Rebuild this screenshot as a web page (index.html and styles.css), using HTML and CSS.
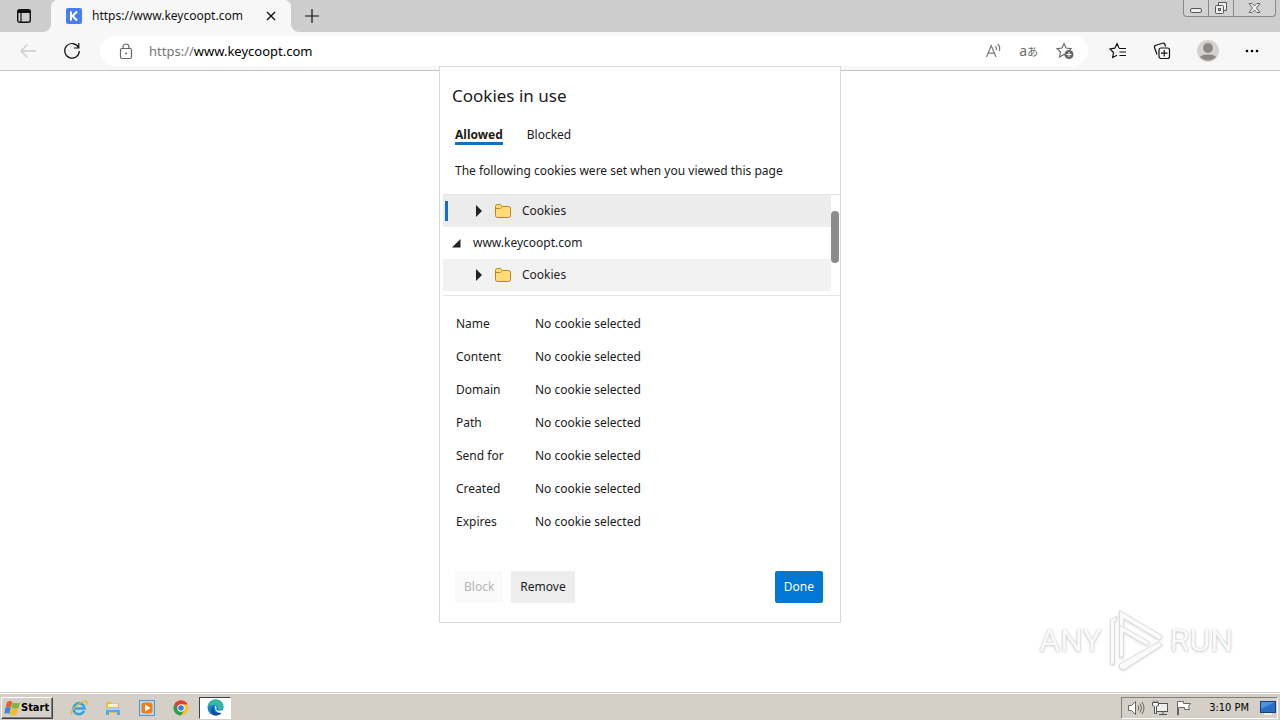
FILE: index.html
```
<!DOCTYPE html>
<html lang="en">
<head>
<meta charset="utf-8">
<title>Cookies in use</title>
<link rel="stylesheet" href="styles.css">
</head>
<body>
<header class="tabstrip">
  <button class="tab-actions" aria-label="Tab actions"><svg width="16" height="16" viewBox="0 0 16 16"><rect x="1.7" y="1.7" width="12.6" height="12.6" rx="2" fill="none" stroke="#111" stroke-width="1.4"/><path d="M1.5 2h13v3h-13z" fill="#111"/><path d="M5 4v10" stroke="#111" stroke-width="1.2"/></svg></button>
  <div class="tab">
    <svg width="16" height="16" viewBox="0 0 16 16"><rect width="16" height="16" rx="2" fill="#4a7df0"/><path d="M5 3.500v9M11 3.500 6.500 8l4.500 4.500" fill="none" stroke="#fff" stroke-width="2"/></svg>
    <span class="tab-title">https://www.keycoopt.com</span>
    <button class="tab-close" aria-label="Close tab"><svg width="10" height="10" viewBox="0 0 10 10"><path d="m1 1 8 8M9 1 1 9" stroke="#111" stroke-width="1.4"/></svg></button>
  </div>
  <button class="tab-new" aria-label="New tab"><svg width="14" height="14" viewBox="0 0 14 14"><path d="M7 0v14M0 7h14" stroke="#111" stroke-width="1.2"/></svg></button>
  <div class="strip-end">
  <div class="caption">
    <button aria-label="Minimize"><svg width="14" height="12" viewBox="0 0 14 12"><rect x="1.5" y="6.5" width="11" height="4" rx="1.5" fill="#eee" stroke="#555"/></svg></button>
    <button aria-label="Restore"><svg width="14" height="13" viewBox="0 0 14 13"><path d="M4.500 3.500v-3h8v8h-3" fill="#eee" stroke="#555"/><rect x="1.500" y="3.500" width="8" height="8" rx="1" fill="#eee" stroke="#555"/><rect x="4.500" y="6.500" width="2" height="2" fill="#ccc" stroke="#555"/></svg></button>
    <button class="caption-close" aria-label="Close"><svg width="13" height="12" viewBox="0 0 13 12"><path d="M1 1.500h3.200L6.500 4l2.300-2.500H12L8.500 6l3.500 4.500H8.800L6.500 8l-2.300 2.500H1L4.500 6z" fill="#eee" stroke="#666"/></svg></button>
  </div>
  </div>
</header>
<nav class="toolbar">
  <button class="back" aria-label="Back" disabled><svg width="18" height="16" viewBox="0 0 18 16"><path d="M17 8H2M8.500 1.500 2 8l6.500 6.500" fill="none" stroke="#ccc" stroke-width="1.300"/></svg></button>
  <button class="reload" aria-label="Refresh"><svg width="18" height="18" viewBox="0 0 18 18"><path d="M15.500 5.500A7.300 7.300 0 1 0 16.300 9M15.800 1v5h-5" fill="none" stroke="#111" stroke-width="1.200"/></svg></button>
  <div class="address">
    <svg class="lock" width="14" height="17" viewBox="0 0 14 17"><rect x="1.500" y="5.500" width="11" height="10" rx="1.500" fill="none" stroke="#666" stroke-width="1.200"/><path d="M4 5.500V4a3 3 0 0 1 6 0v1.500" fill="none" stroke="#666" stroke-width="1.200"/><circle cx="7" cy="10.500" r="1" fill="#666"/></svg>
    <span class="url"><span class="scheme">https://</span>www.keycoopt.com</span>
    <button class="read" aria-label="Read aloud"><svg width="18" height="16" viewBox="0 0 18 16"><path d="m1.500 14 4.700-11.500L11 14M3 10.200h6.400M10.500 3.200a4 4 0 0 1 .8 4M12.800 1a7 7 0 0 1 1.500 7" fill="none" stroke="#777" stroke-width="1.200"/></svg></button>
    <button class="translate" aria-label="Translate"><span class="lat">a</span><span class="kana">あ</span></button>
    <button class="favorite" aria-label="Add to favorites"><svg width="18" height="18" viewBox="0 0 18 18"><path d="m8 1.500 2 4.500 5.200.6L11.500 10l1 5L8 12.500 3.500 15l1-5L1 6.600 6 6z" fill="none" stroke="#666" stroke-width="1.100"/><circle cx="13" cy="12.500" r="4.500" fill="#666"/><path d="M13 10v5M10.500 12.500h5" stroke="#fff"/></svg></button>
  </div>
  <div class="tools">
    <button aria-label="Favorites"><svg width="18" height="18" viewBox="0 0 18 18"><path d="M10 6 8 1.700 5.800 6.200 1 7l3.500 3.500-.8 5L8 13.200M10 6.500h7M10.500 10h6.500M10.500 13.500h6.500" fill="none" stroke="#111" stroke-width="1.200"/></svg></button>
    <button aria-label="Collections"><svg width="18" height="18" viewBox="0 0 18 18"><path d="M4 12.500 1.500 5.500A2 2 0 0 1 3 3.200l6.500-2A2 2 0 0 1 12 2.500l.5 2" fill="none" stroke="#111" stroke-width="1.200"/><rect x="6" y="6" width="10.500" height="10.500" rx="2" fill="#f7f7f7" stroke="#111" stroke-width="1.200"/><path d="M11.200 8v6.500M8 11.200h6.500" stroke="#111" stroke-width="1.200"/></svg></button>
    <button aria-label="Profile"><svg width="22" height="22" viewBox="0 0 22 22"><circle cx="11" cy="11" r="11" fill="#d4d2d0"/><circle cx="11" cy="8" r="5" fill="#8b8886"/><path d="M3 17c1-3.500 15-3.500 16 0A11 11 0 0 1 3 17z" fill="#8b8886"/></svg></button>
    <button aria-label="Settings and more"><svg width="14" height="4" viewBox="0 0 14 4"><circle cx="2" cy="2" r="1.300"/><circle cx="7" cy="2" r="1.300"/><circle cx="12" cy="2" r="1.300"/></svg></button>
  </div>
</nav>
<main class="page">
  <div class="watermark">
    <span>ANY</span>
    <svg width="58" height="66" viewBox="0 0 58 66"><g fill="#fbfbfb" stroke="#dcdcdc" stroke-linejoin="round"><path d="M3.500 57V13l6-4v4l-2 1v43z"/><path d="M12.500 50V3.500L55.500 29l-3 4-36-21.500V50z"/><path d="M12.500 50V18l30 17-3 3.500-23-13.500V50z"/><path d="m12.500 57 39-22 4 3-39 25-4-2z"/></g></svg>
    <span>RUN</span>
  </div>
</main>
<section class="dialog" role="dialog" aria-labelledby="dialog-title">
  <h1 class="dialog-title" id="dialog-title">Cookies in use</h1>
  <div class="tabs" role="tablist">
    <button class="pivot pivot-on" role="tab" aria-selected="true">Allowed</button>
    <button class="pivot" role="tab" aria-selected="false">Blocked</button>
  </div>
  <p class="intro">The following cookies were set when you viewed this page</p>
  <div class="tree-box">
    <ul class="tree">
      <li class="row row-selected"><svg class="arrow" width="8" height="12" viewBox="0 0 8 12"><path d="M1 0v12l6-6z" fill="#222"/></svg><svg class="folder" width="16" height="14" viewBox="0 0 16 14"><path d="M.5 2.500q0-2 2-2h3l2 2h6q2 0 2 2v7q0 2-2 2h-11q-2 0-2-2z" fill="#ffdc78" stroke="#b8871b"/><path d="M1 4.500h4.500l2-2" fill="none" stroke="#c9911b"/></svg>Cookies</li>
      <li class="row row-site"><svg class="arrow" width="9" height="9" viewBox="0 0 9 9"><path d="M8.500 0v8.500H0z" fill="#222"/></svg>www.keycoopt.com</li>
      <li class="row row-alt"><svg class="arrow" width="8" height="12" viewBox="0 0 8 12"><path d="M1 0v12l6-6z" fill="#222"/></svg><svg class="folder" width="16" height="14" viewBox="0 0 16 14"><path d="M.5 2.500q0-2 2-2h3l2 2h6q2 0 2 2v7q0 2-2 2h-11q-2 0-2-2z" fill="#ffdc78" stroke="#b8871b"/><path d="M1 4.500h4.500l2-2" fill="none" stroke="#c9911b"/></svg>Cookies</li>
    </ul>
    <div class="scroll"><div class="thumb"></div></div>
  </div>
  <dl class="details">
    <dt>Name</dt><dd>No cookie selected</dd>
    <dt>Content</dt><dd>No cookie selected</dd>
    <dt>Domain</dt><dd>No cookie selected</dd>
    <dt>Path</dt><dd>No cookie selected</dd>
    <dt>Send for</dt><dd>No cookie selected</dd>
    <dt>Created</dt><dd>No cookie selected</dd>
    <dt>Expires</dt><dd>No cookie selected</dd>
  </dl>
  <div class="actions">
    <button class="btn" disabled>Block</button>
    <button class="btn">Remove</button>
    <button class="btn btn-primary">Done</button>
  </div>
</section>
<footer class="taskbar">
  <button class="start"><svg width="17" height="16" viewBox="0 0 17 16"><path d="M3 2q3-2 5.500 0L7 7.500q-2.500-1.500-5.500 0z" fill="#e8602c"/><path d="M9 2.500q3 1.500 7 0L14.500 8q-3 1.500-7 0z" fill="#7fb539"/><path d="M1.300 8q3-2 5.500 0l-1.500 6q-2.500-1.500-5 0z" fill="#3f86d8"/><path d="M7.300 8.500q3 1.500 7 0L12.800 14.500q-3 1.500-7 0z" fill="#f4bb2d"/></svg>Start</button>
  <div class="apps">
    <button aria-label="Internet Explorer"><svg width="18" height="18" viewBox="0 0 18 18"><path d="M14 12A5.500 5.500 0 1 1 14.500 9.500H5" fill="none" stroke="#35a4dc" stroke-width="2.600"/><path d="M2 15.500C-1 12 11 1 16.500 2.500c1 .5.500 2-.5 3.500" fill="none" stroke="#e0b63a" stroke-width="1.300"/></svg></button>
    <button aria-label="Explorer"><svg width="16" height="16" viewBox="0 0 16 16"><path d="M1 2h5l1 1.500h7V13H1z" fill="#e3bd48"/><path d="M3 4h10v3H3z" fill="#fff3bb"/><path d="M1 8h14v7h-3v-3H4v3H1z" fill="#5fa9d6"/><path d="M1 8h14v2H1z" fill="#a5d3ea"/></svg></button>
    <button aria-label="Media Player"><svg width="16" height="16" viewBox="0 0 16 16"><rect x=".5" y=".5" width="15" height="15" fill="#b9d9ef" stroke="#5b94c0"/><rect x="2.500" y="2.500" width="11" height="11" rx="3" fill="#ef7f1a"/><path d="M6 4.500v7L11.500 8z" fill="#fff"/></svg></button>
    <button aria-label="Chrome"><svg width="16" height="16" viewBox="0 0 16 16"><circle cx="8" cy="8" r="7.500" fill="#f8c52c"/><path d="M8 8 1.500 4.250A7.500 7.500 0 0 1 14.500 4.250H8z" fill="#df4030"/><path d="M1.500 4.250 8 8l3.250 1.900L8 15.500A7.500 7.500 0 0 1 1.500 4.250z" fill="#2f9e4f"/><path d="M1.500 4.250A7.500 7.500 0 0 1 14.500 4.250H8A3.750 3.750 0 0 0 4.750 9.900z" fill="#df4030"/><circle cx="8" cy="8" r="3.700" fill="#fff"/><circle cx="8" cy="8" r="2.800" fill="#3c79dc"/></svg></button>
    <button class="app-on" aria-label="Edge"><svg width="17" height="17" viewBox="0 0 17 17"><circle cx="8.500" cy="8.500" r="8" fill="#1583d1"/><path d="M.7 7.500C2 1.500 7 .2 10.500.7c4 .7 6 3.800 6 6.300 0 3-2.500 4.500-5.500 4 1-3-1-5-4-5-3 0-5 1-6.300 1.500z" fill="#35b7a4"/><path d="M7 7.200c-1.500 3 .5 6.500 4.500 6.800 1.500 0 3-.5 3.800-1.200-1.500 3-5 4.500-8.300 3.400C3 14.500 3.500 9 7 7.200z" fill="#124f9c"/><path d="M8 6.800c2 .5 1.500 2.500 1.300 4 1.500 1.500 4 1.200 7.700 0l-1 2.500c-3 1.700-8.500 0-8-6.500z" fill="#fff"/></svg></button>
  </div>
  <div class="tray">
    <svg width="17" height="16" viewBox="0 0 17 16" fill="none" stroke="#666"><path d="M.5 5.500h3l4-4v13l-4-4h-3z" fill="#fff"/><path d="M10 5.500q1.500 2.500 0 5M12 3.500q3 4.500 0 9M14 2q4 6 0 12"/></svg>
    <svg width="17" height="16" viewBox="0 0 17 16" fill="#eee" stroke="#555"><rect x="4.500" y="3.500" width="11" height="8"/><path d="M7 14.500h8M11 12v2M2 .5v3M5 .5v3"/><path d="M.5 2.500h6v3l-2 1v7h-2v-7l-2-1z"/></svg>
    <svg width="16" height="16" viewBox="0 0 16 16" fill="#fff" stroke="#666"><path d="M1.500 15V1.500h6v2h7l-2 3 1 3h-5v-2h-6V15z"/></svg>
    <time class="clock">3:10 PM</time>
    <svg width="16" height="14" viewBox="0 0 16 14"><rect x=".5" y=".5" width="15" height="11" fill="#286fc5" stroke="#173f7d"/><path d="M1 1h14L1 8z" fill="#4b91dc"/><path d="M4 13h8" stroke="#eee" stroke-width="2"/></svg>
  </div>
</footer>
</body>
</html>
```
FILE: styles.css
```
* { box-sizing: border-box; }
body { margin: 0; min-height: 100vh; display: flex; flex-direction: column; position: relative; background: #fff; color: #1b1b1b; font: 12px/16px "Noto Sans", "Open Sans", sans-serif; }
button { border: 0; padding: 0; background: none; font: inherit; color: inherit; display: flex; align-items: center; justify-content: center; }
svg { flex: none; display: block; }
h1, p, ul, dl, dd { margin: 0; padding: 0; }

.tabstrip { height: 32px; display: flex; background: #f7f7f7; }
.tab-actions { width: 51px; padding-right: 3px; background: #cdcdcd; border-radius: 0 0 8px 0; }
.tab { width: 240px; padding: 0 14px 0 15px; display: flex; align-items: center; background: radial-gradient(circle at 8px 8px, #f7f7f7 8px, #cdcdcd 9px) 0 0 / 8px 8px no-repeat, radial-gradient(circle at 0 8px, #f7f7f7 8px, #cdcdcd 9px) 100% 0 / 8px 8px no-repeat, #f7f7f7; }
.tab-title { margin-left: 10px; flex: 1; color: #111; white-space: nowrap; }
.tab-close { width: 12px; height: 32px; }
.tab-new { width: 42px; background: #cdcdcd; border-radius: 0 0 0 8px; }
.strip-end { flex: 1; display: flex; justify-content: flex-end; align-items: flex-start; padding-right: 4px; background: #cdcdcd; }
.caption { height: 17px; display: flex; border: 1px solid #888; border-top: 0; border-radius: 0 0 4px 4px; background: #d2d2d2; }
.caption button { width: 25px; border-right: 1px solid #888; }
.caption .caption-close { width: 41px; border-right: 0; }

.toolbar { height: 39px; display: flex; align-items: center; background: #f7f7f7; border-bottom: 1px solid #c4c4c4; }
.back { width: 18px; margin-left: 19px; }
.reload { width: 18px; margin-left: 26px; }
.address { flex: 1; height: 30px; margin-left: 19px; padding: 0 14px 0 19px; display: flex; align-items: center; border-radius: 15px; background: #fff; }
.url { margin-left: 16px; flex: 1; font-size: 13px; color: #000; }
.scheme { color: #767676; }
.read { width: 18px; }
.translate { margin: 0 18px 0 16px; color: #6b6b6b; font-size: 14px; }
.kana { font: 11px/16px "Noto Sans CJK JP", sans-serif; }
.tools { display: flex; align-items: center; gap: 26px; padding: 0 21px; }

.page { flex: 1; display: flex; justify-content: flex-end; align-items: flex-end; padding: 0 47px 19px; }
.watermark { display: flex; align-items: center; gap: 5px; font: 32px/40px Roboto, sans-serif; color: #fafafa; text-shadow: 0 0 1px #bbb, 0 1px 3px #ccc; }
.watermark svg { filter: drop-shadow(0 1px 1px #ddd); }

.dialog { position: absolute; top: 66px; left: 50%; width: 402px; margin-left: -201px; border: 1px solid #d9d9d9; background: #fff; padding-bottom: 19px; }
.dialog-title { padding: 17px 12px 0; font-size: 17px; line-height: 24px; font-weight: 400; }
.tabs { display: flex; gap: 24px; padding: 19px 15px 0; }
.pivot { height: 18px; border-bottom: 3px solid transparent; }
.pivot-on { font-weight: 700; border-bottom-color: #0f70c4; }
.intro { padding: 18px 15px 15px; }
.tree-box { height: 102px; margin-left: 3px; display: flex; border: solid #e5e5e5; border-width: 1px 0; }
.tree { flex: 1; list-style: none; }
.row { height: 32px; padding-left: 32px; display: flex; align-items: center; }
.row-selected { background: linear-gradient(#0f70c4, #0f70c4) 2px 6px / 3px 20px no-repeat #ececec; }
.row-alt { background: #f2f2f2; }
.row-site { padding-left: 9px; }
.row-site .arrow { margin-right: 12px; }
.folder { margin: 0 11px 0 12px; }
.scroll { width: 9px; padding: 16px 1px 0 0; }
.thumb { height: 52px; border-radius: 4px; background: #8b8b8b; }
.details { display: grid; grid-template-columns: 79px 1fr; padding: 11px 16px 0; line-height: 33px; }
.actions { display: flex; gap: 8px; padding: 33px 17px 0 15px; }
.btn { height: 32px; padding: 0 9px; border-radius: 2px; background: #ededed; }
.btn:disabled { background: #fafafa; color: #b5b5b5; }
.btn-primary { margin-left: auto; background: #0078d4; color: #fff; }

.taskbar { height: 28px; display: flex; align-items: center; background: #d4d0c8; border-top: 1px solid #d4d0c8; box-shadow: inset 0 1px #fff; font: 11px/16px "DejaVu Sans Condensed", sans-serif; color: #000; }
.start { height: 22px; margin: 2px 0 0 1px; padding: 0 3px 0 2px; font-weight: 700; border: 1px solid; border-color: #fff #404040 #404040 #fff; box-shadow: inset -1px -1px #808080; }
.apps { display: flex; align-items: center; margin: 2px 0 0 9px; }
.apps button { width: 34px; height: 22px; }
.apps .app-on { width: 32px; margin-left: 1px; background: #fff; border: 1px solid; border-color: #404040 #fff #fff #404040; }
.tray { height: 22px; margin: 2px 2px 0 auto; padding: 0 1px 0 6px; display: flex; align-items: center; gap: 7px; border: 1px solid; border-color: #808080 #fff #fff #808080; }
.clock { margin: 0 4px 0 10px; }
```
